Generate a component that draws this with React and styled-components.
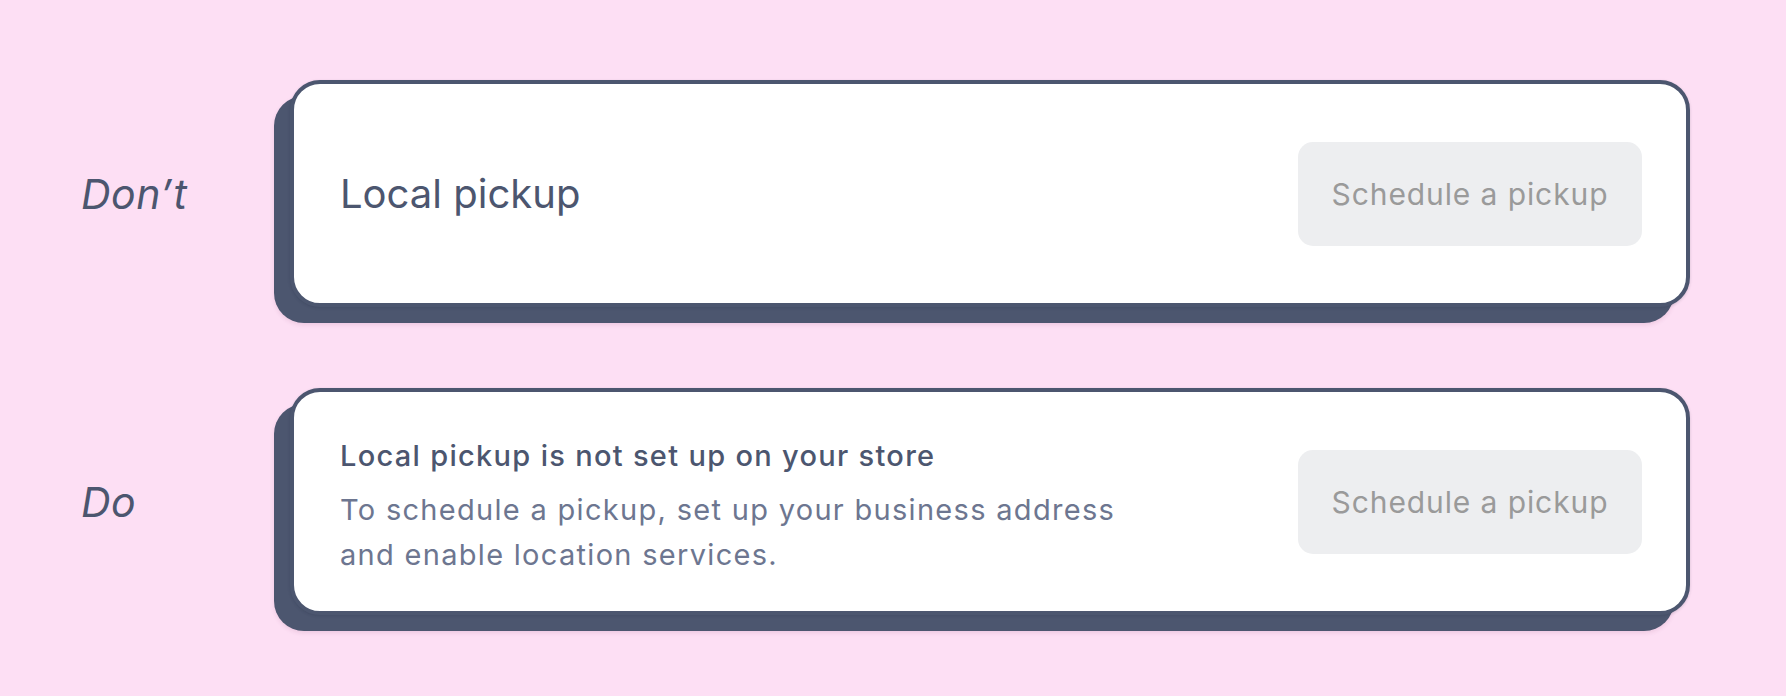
import React from "react";
import styled, { createGlobalStyle } from "styled-components";

const GlobalStyle = createGlobalStyle`
  html, body {
    margin: 0;
    padding: 0;
    background: #fddff4;
  }
  body {
    font-family: Inter, "Noto Sans", "Liberation Sans", sans-serif;
    -webkit-font-smoothing: antialiased;
  }
`;

const Page = styled.div`
  width: 1786px;
  height: 696px;
  box-sizing: border-box;
  padding: 80px 0 0 81px;
  display: flex;
  flex-direction: column;
  gap: 81px;
`;

const Row = styled.div`
  display: flex;
  align-items: center;
`;

const Label = styled.div`
  width: 209px;
  flex-shrink: 0;
  font-size: 41px;
  font-style: italic;
  color: #4c566f;
  letter-spacing: 0.5px;
`;

const Card = styled.div`
  width: 1400px;
  height: 227px;
  box-sizing: border-box;
  background: #ffffff;
  border: 4px solid #4c566f;
  border-radius: 30px;
  box-shadow: 0 1px 3px rgba(30, 40, 60, 0.18), -16px 16px 0 #4c566f,
    -16px 18px 4px rgba(120, 50, 100, 0.12);
  padding: 0 44px 0 46px;
  display: flex;
  align-items: center;
  justify-content: space-between;
`;

const Title = styled.div`
  font-size: 40px;
  color: #4c566f;
  font-weight: 400;
`;

const Message = styled.div`
  display: flex;
  flex-direction: column;
  gap: 11px;
  padding-top: 10px;
`;

const Heading = styled.div`
  font-size: 29px;
  line-height: 40px;
  font-weight: 500;
  color: #4c566f;
  letter-spacing: 1.3px;
`;

const Body = styled.div`
  font-size: 29px;
  line-height: 45px;
  color: #6d7690;
  letter-spacing: 1.3px;
  max-width: 800px;
`;

const Button = styled.button`
  width: 344px;
  height: 104px;
  flex-shrink: 0;
  border: none;
  border-radius: 15px;
  background: #edeef0;
  color: #9a9a9a;
  font-family: inherit;
  font-size: 30px;
  font-weight: 400;
  letter-spacing: 0.9px;
  cursor: default;
`;

export default function App() {
  return (
    <>
      <GlobalStyle />
      <Page>
        <Row>
          <Label>Don’t</Label>
          <Card>
            <Title>Local pickup</Title>
            <Button>Schedule a pickup</Button>
          </Card>
        </Row>
        <Row>
          <Label>Do</Label>
          <Card>
            <Message>
              <Heading>Local pickup is not set up on your store</Heading>
              <Body>
                To schedule a pickup, set up your business address and enable
                location services.
              </Body>
            </Message>
            <Button>Schedule a pickup</Button>
          </Card>
        </Row>
      </Page>
    </>
  );
}
